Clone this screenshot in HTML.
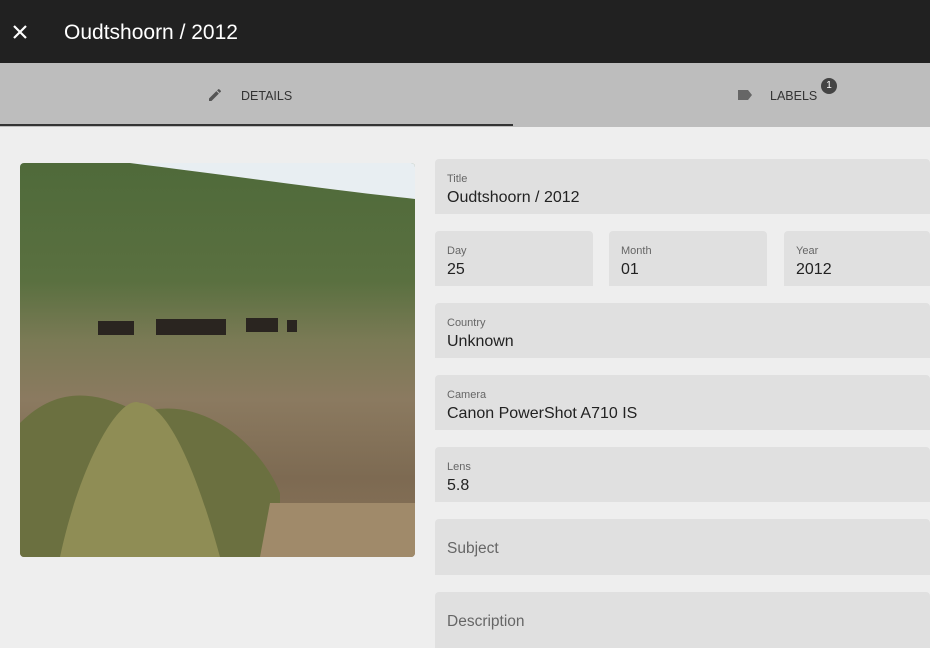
<!DOCTYPE html>
<html><head><style>
body{margin:0;width:930px;height:627px;overflow:hidden;background:#eeeeee;font-family:"Liberation Sans",sans-serif;position:relative}
.hdr{position:absolute;left:0;top:0;width:930px;height:63px;background:#212121;color:#fff}
.hdr .t{position:absolute;left:64px;top:21px;font-size:21px}
.tabs{position:absolute;left:0;top:63px;width:930px;height:64px;background:#bdbdbd}
.tab{position:absolute;top:26px;font-size:12.5px;color:#333}
.ul{position:absolute;left:0;top:124px;width:513px;height:2px;background:#333}
.f{position:absolute;background:#e0e0e0;border-radius:4px 4px 0 0}
.f .l{position:absolute;left:12px;top:14px;font-size:11px;color:#666}
.f .v{position:absolute;left:12px;top:30px;font-size:16px;color:#222}
.f .p{position:absolute;left:12px;top:21px;font-size:15.5px;color:#666}
</style></head><body>
<div class="hdr">
<svg style="position:absolute;left:12px;top:24px" width="16" height="16" viewBox="0 0 16 16"><path d="M2 2L14 14M14 2L2 14" stroke="#fff" stroke-width="2.2"/></svg>
<div class="t">Oudtshoorn / 2012</div></div>
<div class="tabs">
<svg style="position:absolute;left:207px;top:24px" width="16" height="16" viewBox="0 0 24 24"><path fill="#555" d="M3 17.25V21h3.75L17.8 9.94l-3.75-3.75L3 17.25zM20.7 7.04a1 1 0 000-1.41l-2.34-2.34a1 1 0 00-1.41 0l-1.83 1.83 3.75 3.75 1.83-1.83z"/></svg>
<div class="tab" style="left:241px">DETAILS</div>
<svg style="position:absolute;left:737px;top:27px" width="15" height="10" viewBox="0 0 15 10"><path fill="#666" d="M1 0h10l4 5-4 5H1z"/></svg>
<div class="tab" style="left:770px">LABELS</div>
<div style="position:absolute;left:821px;top:15px;width:16px;height:16px;border-radius:50%;background:#444;color:#fff;font-size:10px;text-align:center;line-height:16px">1</div>
</div>
<div class="ul"></div>
<svg style="position:absolute;left:20px;top:163px;border-radius:4px" width="395" height="394" viewBox="0 0 395 394">
<defs><linearGradient id="g" x1="0" y1="0" x2="0" y2="1">
<stop offset="0" stop-color="#4f6a3a"/><stop offset=".3" stop-color="#5a7040"/><stop offset=".45" stop-color="#7a7a55"/><stop offset=".6" stop-color="#8b7a60"/><stop offset=".8" stop-color="#7d6a52"/><stop offset="1" stop-color="#8a7458"/></linearGradient></defs>
<rect width="395" height="394" fill="url(#g)"/>
<path d="M110 0H395V36C320 28 220 14 110 0z" fill="#e8eef2"/>
<path d="M0 260C40 220 80 230 120 250C180 230 240 280 260 330V394H0z" fill="#6b7040"/>
<path d="M250 340H395V394H240z" fill="#a08a6a"/>
<path d="M40 394C60 300 100 230 120 240C150 240 180 320 200 394z" fill="#8f8d55"/>
<g fill="#2a2520"><rect x="78" y="158" width="36" height="14"/><rect x="136" y="156" width="70" height="16"/><rect x="226" y="155" width="32" height="14"/><rect x="267" y="157" width="10" height="12"/></g>
</svg>
<div class="f" style="left:435px;top:159px;width:495px;height:55px"><div class="l">Title</div><div class="v">Oudtshoorn / 2012</div></div>
<div class="f" style="left:435px;top:231px;width:158px;height:55px"><div class="l">Day</div><div class="v">25</div></div>
<div class="f" style="left:609px;top:231px;width:158px;height:55px"><div class="l">Month</div><div class="v">01</div></div>
<div class="f" style="left:784px;top:231px;width:146px;height:55px"><div class="l">Year</div><div class="v">2012</div></div>
<div class="f" style="left:435px;top:303px;width:495px;height:55px"><div class="l">Country</div><div class="v">Unknown</div></div>
<div class="f" style="left:435px;top:375px;width:495px;height:55px"><div class="l">Camera</div><div class="v">Canon PowerShot A710 IS</div></div>
<div class="f" style="left:435px;top:447px;width:495px;height:55px"><div class="l">Lens</div><div class="v">5.8</div></div>
<div class="f" style="left:435px;top:519px;width:495px;height:56px"><div class="p">Subject</div></div>
<div class="f" style="left:435px;top:592px;width:495px;height:56px"><div class="p">Description</div></div>
</body></html>
